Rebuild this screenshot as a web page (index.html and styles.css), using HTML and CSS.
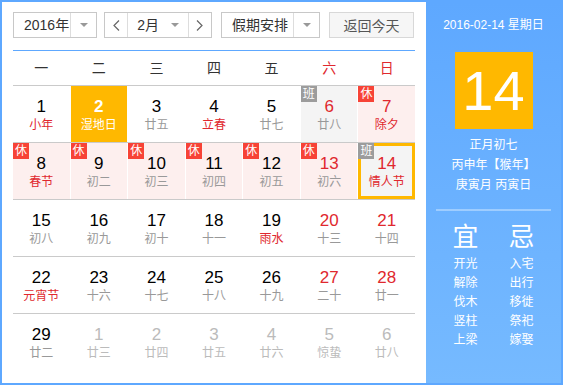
FILE: index.html
```html
<!DOCTYPE html>
<html lang="zh-CN">
<head>
  <meta charset="UTF-8" />
  <title>万年历</title>
  <link rel="stylesheet" href="styles.css">
</head>
<body>
  <div class="calendar">
    <div class="main">
      <div class="toolbar">
        <div class="select year"><span class="label">2016年</span><span class="drop"><i class="caret"></i></span></div>
        <div class="month-group">
          <span class="nav"><svg width="7" height="11" viewBox="0 0 7 11"><polyline points="6,0.5 1,5.5 6,10.5" /></svg></span>
          <span class="month"><span class="label">2月</span><i class="caret"></i></span>
          <span class="nav"><svg width="7" height="11" viewBox="0 0 7 11"><polyline points="1,0.5 6,5.5 1,10.5" /></svg></span>
        </div>
        <div class="select holiday"><span class="label">假期安排</span><span class="drop"><i class="caret"></i></span></div>
        <button class="today-btn">返回今天</button>
      </div>

      <div class="weekdays">
        <span>一</span><span>二</span><span>三</span><span>四</span><span>五</span>
        <span class="weekend">六</span><span class="weekend">日</span>
      </div>

      <div class="week">
        <div class="day"><b class="num">1</b><span class="lunar fest">小年</span></div>
        <div class="day today"><b class="num">2</b><span class="lunar">湿地日</span></div>
        <div class="day"><b class="num">3</b><span class="lunar">廿五</span></div>
        <div class="day"><b class="num">4</b><span class="lunar fest">立春</span></div>
        <div class="day"><b class="num">5</b><span class="lunar">廿七</span></div>
        <div class="day work weekend"><i class="badge">班</i><b class="num">6</b><span class="lunar">廿八</span></div>
        <div class="day rest weekend"><i class="badge">休</i><b class="num">7</b><span class="lunar fest">除夕</span></div>
      </div>

      <div class="week">
        <div class="day rest"><i class="badge">休</i><b class="num">8</b><span class="lunar fest">春节</span></div>
        <div class="day rest"><i class="badge">休</i><b class="num">9</b><span class="lunar">初二</span></div>
        <div class="day rest"><i class="badge">休</i><b class="num">10</b><span class="lunar">初三</span></div>
        <div class="day rest"><i class="badge">休</i><b class="num">11</b><span class="lunar">初四</span></div>
        <div class="day rest"><i class="badge">休</i><b class="num">12</b><span class="lunar">初五</span></div>
        <div class="day rest weekend"><i class="badge">休</i><b class="num">13</b><span class="lunar">初六</span></div>
        <div class="day work weekend selected"><i class="badge">班</i><b class="num">14</b><span class="lunar fest">情人节</span></div>
      </div>

      <div class="week">
        <div class="day"><b class="num">15</b><span class="lunar">初八</span></div>
        <div class="day"><b class="num">16</b><span class="lunar">初九</span></div>
        <div class="day"><b class="num">17</b><span class="lunar">初十</span></div>
        <div class="day"><b class="num">18</b><span class="lunar">十一</span></div>
        <div class="day"><b class="num">19</b><span class="lunar fest">雨水</span></div>
        <div class="day weekend"><b class="num">20</b><span class="lunar">十三</span></div>
        <div class="day weekend"><b class="num">21</b><span class="lunar">十四</span></div>
      </div>

      <div class="week">
        <div class="day"><b class="num">22</b><span class="lunar fest">元宵节</span></div>
        <div class="day"><b class="num">23</b><span class="lunar">十六</span></div>
        <div class="day"><b class="num">24</b><span class="lunar">十七</span></div>
        <div class="day"><b class="num">25</b><span class="lunar">十八</span></div>
        <div class="day"><b class="num">26</b><span class="lunar">十九</span></div>
        <div class="day weekend"><b class="num">27</b><span class="lunar">二十</span></div>
        <div class="day weekend"><b class="num">28</b><span class="lunar">廿一</span></div>
      </div>

      <div class="week last">
        <div class="day"><b class="num">29</b><span class="lunar">廿二</span></div>
        <div class="day other"><b class="num">1</b><span class="lunar">廿三</span></div>
        <div class="day other"><b class="num">2</b><span class="lunar">廿四</span></div>
        <div class="day other"><b class="num">3</b><span class="lunar">廿五</span></div>
        <div class="day other"><b class="num">4</b><span class="lunar">廿六</span></div>
        <div class="day other"><b class="num">5</b><span class="lunar">惊蛰</span></div>
        <div class="day other"><b class="num">6</b><span class="lunar">廿八</span></div>
      </div>
    </div>

    <aside class="detail">
      <div class="date-line">2016-02-14 星期日</div>
      <div class="big-day">14</div>
      <div class="info">正月初七</div>
      <div class="info">丙申年【猴年】</div>
      <div class="info">庚寅月 丙寅日</div>
      <div class="divider"></div>
      <div class="almanac">
        <div class="col">
          <div class="head">宜</div>
          <div>开光</div><div>解除</div><div>伐木</div><div>竖柱</div><div>上梁</div>
        </div>
        <div class="col">
          <div class="head">忌</div>
          <div>入宅</div><div>出行</div><div>移徙</div><div>祭祀</div><div>嫁娶</div>
        </div>
      </div>
    </aside>
  </div>
</body>
</html>
```

FILE: styles.css
```css
body { margin: 0; font-family: "Liberation Sans", "Noto Sans CJK SC", sans-serif; background: #fff; }
.calendar { width: 563px; height: 385px; box-sizing: border-box; border: 2px solid #5ea8ff; display: flex; }

/* left side */
.main { width: 424px; box-sizing: border-box; padding: 10px 11px 0 11px; background: #fff; }
.toolbar { display: flex; height: 26px; font-size: 14px; color: #333; }
.select, .month-group { display: flex; box-sizing: border-box; height: 26px; border: 1px solid #c8c8c8; }
.select .label { flex: 1; min-width: 0; white-space: nowrap; line-height: 24px; padding-left: 10px; }
.select .drop { flex-shrink: 0; width: 25px; border-left: 1px solid #ddd; display: flex; align-items: center; justify-content: center; }
.caret { width: 0; height: 0; border-left: 4px solid transparent; border-right: 4px solid transparent; border-top: 4px solid #999; }
.year { width: 84px; }
.month-group { width: 108px; margin-left: 7px; }
.nav { width: 23px; display: flex; align-items: center; justify-content: center; }
.nav + .month { border-left: 1px solid #ddd; }
.nav svg polyline { fill: none; stroke: #666; stroke-width: 1.2; }
.month { width: 63px; box-sizing: border-box; border-right: 1px solid #ddd; display: flex; align-items: center; padding: 0 9px 0 9px; }
.month .label { flex: 1; line-height: 24px; }
.holiday { width: 99px; margin-left: 9px; }
.today-btn { width: 85px; height: 26px; margin-left: 9px; padding: 0; border: 1px solid #d8d8d8; background: #f6f6f6; color: #555; font-size: 14px; font-family: inherit; }

.weekdays, .week { display: grid; grid-template-columns: repeat(7, 1fr); column-gap: 1px; }
.weekdays { margin-top: 12px; border-top: 1px solid #5ea8ff; border-bottom: 1px solid #cacaca; height: 34px; }
.weekdays span { text-align: center; line-height: 34px; font-size: 14px; color: #333; }
.weekdays .weekend { color: #e0282e; }

.week { height: 56px; border-bottom: 1px solid #cacaca; }
.week.last { border-bottom: none; }
.day { position: relative; text-align: center; padding-top: 11px; }
.num { display: block; font-weight: normal; font-size: 17px; line-height: 20px; color: #000; }
.lunar { display: block; font-size: 12px; line-height: 16px; color: #999; }
.lunar.fest { color: #e0282e; }
.weekend .num { color: #e0282e; }
.rest { background: #fdefee; }
.work { background: #f4f4f4; }
.badge { position: absolute; left: 0; top: 0; z-index: 1; width: 16px; height: 16px; line-height: 16px; font-size: 12px; font-style: normal; color: #fff; text-align: center; }
.rest .badge { background: #f74336; }
.work .badge { background: #9c9c9c; }
.today { background: #ffb800; }
.today .num { font-weight: bold; color: #fff; }
.today .lunar { color: #fff; }
.selected { box-shadow: inset 0 0 0 3px #ffb800; }
.other .num, .other .lunar { color: #bbb; }

/* right side */
.detail { flex: 1; background: linear-gradient(#5ea8ff, #76baff); color: #fff; text-align: center; padding-top: 15px; }
.date-line { font-size: 12px; line-height: 16px; }
.big-day { width: 78px; height: 77px; margin: 19px auto 0; background: #ffb800; font-size: 56px; line-height: 77px; }
.info { font-size: 12px; line-height: 20px; }
.big-day + .info { margin-top: 6px; }
.divider { width: 115px; height: 2px; margin: 14px auto 0; background: rgba(255, 255, 255, 0.35); }
.almanac { display: flex; justify-content: center; margin-top: 11px; font-size: 12px; }
.col { width: 56px; }
.col div { line-height: 19px; }
.col .head { font-size: 26px; line-height: 30px; margin-bottom: 3px; }
```
